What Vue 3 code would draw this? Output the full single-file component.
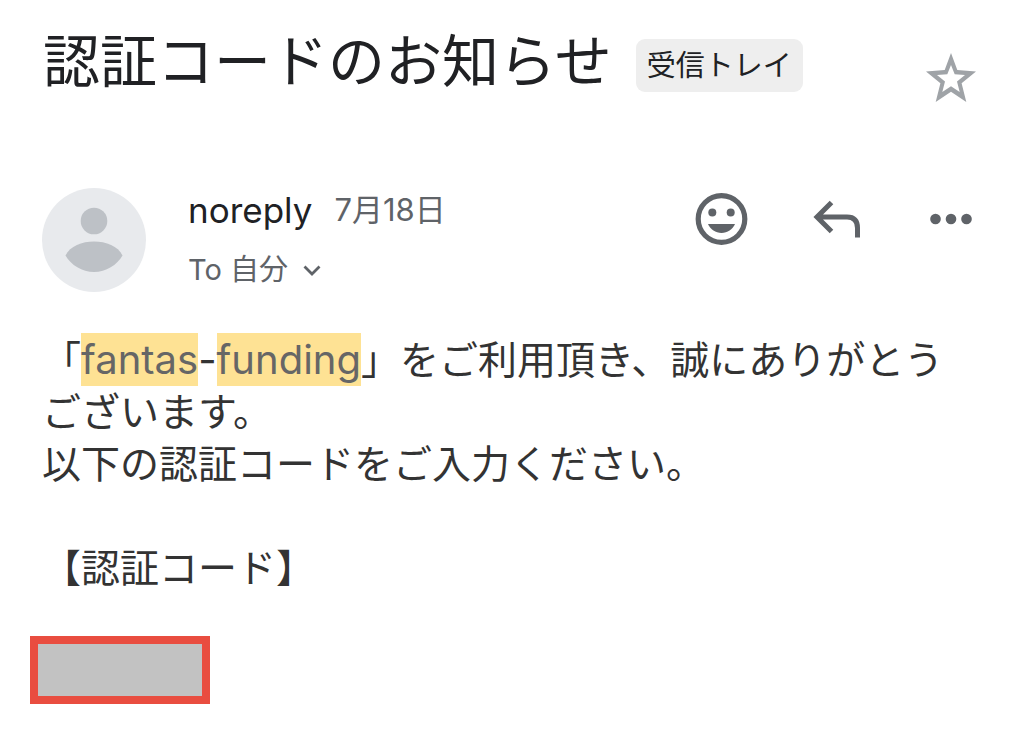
<script setup>
const actions = [
  { id: 'react', label: 'リアクションを追加' },
  { id: 'reply', label: '返信' },
  { id: 'more', label: 'その他' },
]
</script>

<template>
  <main class="mail">
    <header class="subject">
      <h1>認証コードのお知らせ</h1>
      <span class="chip">受信トレイ</span>
      <button class="icon star" type="button" aria-label="スターを付ける">
        <svg width="52" height="52" viewBox="0 0 52 52">
          <path fill="#9fa3a7" fill-rule="evenodd" d="M26 1 32.3 18 51 19.500 36.600 31.300 41.300 50 26 39.800 10.700 50 15.400 31.300 1 19.500 19.700 18ZM26 13 22.300 22.300 12 23.100 20 29.600 17.300 40 26 34.200 34.700 40 32 29.600 40 23.100 29.700 22.300Z" />
        </svg>
      </button>
    </header>

    <section class="sender">
      <svg class="avatar" width="104" height="104" viewBox="0 0 104 104" aria-hidden="true">
        <circle cx="52" cy="52" r="52" fill="#e8eaed" />
        <circle cx="52" cy="33" r="13.300" fill="#bdc1c6" />
        <path fill="#bdc1c6" d="M23.500 67.500C28 58 40 53.500 52 53.500S76 58 80.500 67.500C75 77 64 84 52 84S29 77 23.500 67.500Z" />
      </svg>
      <div class="who">
        <div class="from"><span class="name">noreply</span><time>7月18日</time></div>
        <button class="to" type="button">
          To 自分
          <svg width="20" height="20" viewBox="0 0 20 20" aria-hidden="true">
            <path d="M2.500 6.500 10 14l7.500-7.500" fill="none" stroke="#5f6368" stroke-width="2.800" />
          </svg>
        </button>
      </div>
      <div class="actions">
        <button v-for="a in actions" :key="a.id" class="icon" type="button" :aria-label="a.label">
          <svg v-if="a.id === 'react'" width="54" height="54" viewBox="0 0 54 54" fill="#5f6368">
            <circle cx="27.500" cy="27" r="23.300" fill="none" stroke="#5f6368" stroke-width="5.200" />
            <circle cx="18.300" cy="20.500" r="4" />
            <circle cx="36.700" cy="20.500" r="4" />
            <path d="M14 32h27C38.500 37.500 33.500 41 27.500 41S16.500 37.500 14 32Z" />
          </svg>
          <svg v-else-if="a.id === 'reply'" width="54" height="54" viewBox="0 0 54 54" fill="none" stroke="#5f6368" stroke-width="5">
            <path d="M22.500 10.500 8 25 22.500 39.500M8 25H38Q48.500 25 48.500 36V45.500" />
          </svg>
          <svg v-else width="54" height="54" viewBox="0 0 54 54" fill="#5f6368">
            <circle cx="11.500" cy="27" r="5.300" />
            <circle cx="27" cy="27" r="5.300" />
            <circle cx="42.500" cy="27" r="5.300" />
          </svg>
        </button>
      </div>
    </section>

    <article class="body">
      <p>「<span class="brand"><mark>fantas</mark>-<mark>funding</mark></span>」をご利用頂き、誠にありがとうございます。<br>以下の認証コードをご入力ください。</p>
      <p>【認証コード】</p>
      <div class="code"></div>
    </article>
  </main>
</template>

<style>
body {
  margin: 0;
  background: #fff;
}
</style>

<style scoped>
.mail {
  padding: 28px 42px 24px;
  font-family: Inter, "Noto Sans CJK JP", sans-serif;
  color: #202124;
  text-spacing-trim: space-all;
}
button {
  border: 0;
  padding: 0;
  background: none;
  font: inherit;
  cursor: pointer;
}
svg {
  display: block;
}
.subject {
  display: flex;
  align-items: flex-start;
}
h1 {
  margin: 0;
  padding-left: 1px;
  font-size: 57px;
  line-height: 68px;
  font-weight: 400;
}
.chip {
  margin: 11px 0 0 24px;
  padding: 0 11px;
  border-radius: 9px;
  background: #eee;
  font-size: 29px;
  font-weight: 400;
  line-height: 53px;
  white-space: nowrap;
}
.star {
  margin: 24px 5px 0 auto;
}
.sender {
  display: flex;
  align-items: flex-start;
  margin-top: 84px;
}
.avatar {
  flex: none;
}
.who {
  margin-left: 42px;
}
.from {
  display: flex;
  align-items: center;
  gap: 22px;
  line-height: 44px;
}
.name {
  font-size: 35px;
}
time {
  font-size: 31px;
  color: #5f6368;
}
.to {
  display: flex;
  align-items: center;
  gap: 14px;
  margin-top: 16px;
  font-size: 29px;
  line-height: 44px;
  color: #5f6368;
}
.actions {
  display: flex;
  gap: 61px;
  margin: 4px 4px 0 auto;
}
.body {
  margin-top: 42px;
  font-size: 39px;
  line-height: 52px;
  color: #333;
}
p {
  margin: 0 0 52px;
  padding-right: 20px;
}
.brand {
  font-size: 40px;
}
mark {
  padding: 2px 0;
  background: #fee294;
  color: #666;
}
.code {
  box-sizing: border-box;
  width: 180px;
  height: 68px;
  margin: -10px 0 0 -12px;
  border: 8px solid #e94d40;
  background: #c2c2c2;
}
</style>
